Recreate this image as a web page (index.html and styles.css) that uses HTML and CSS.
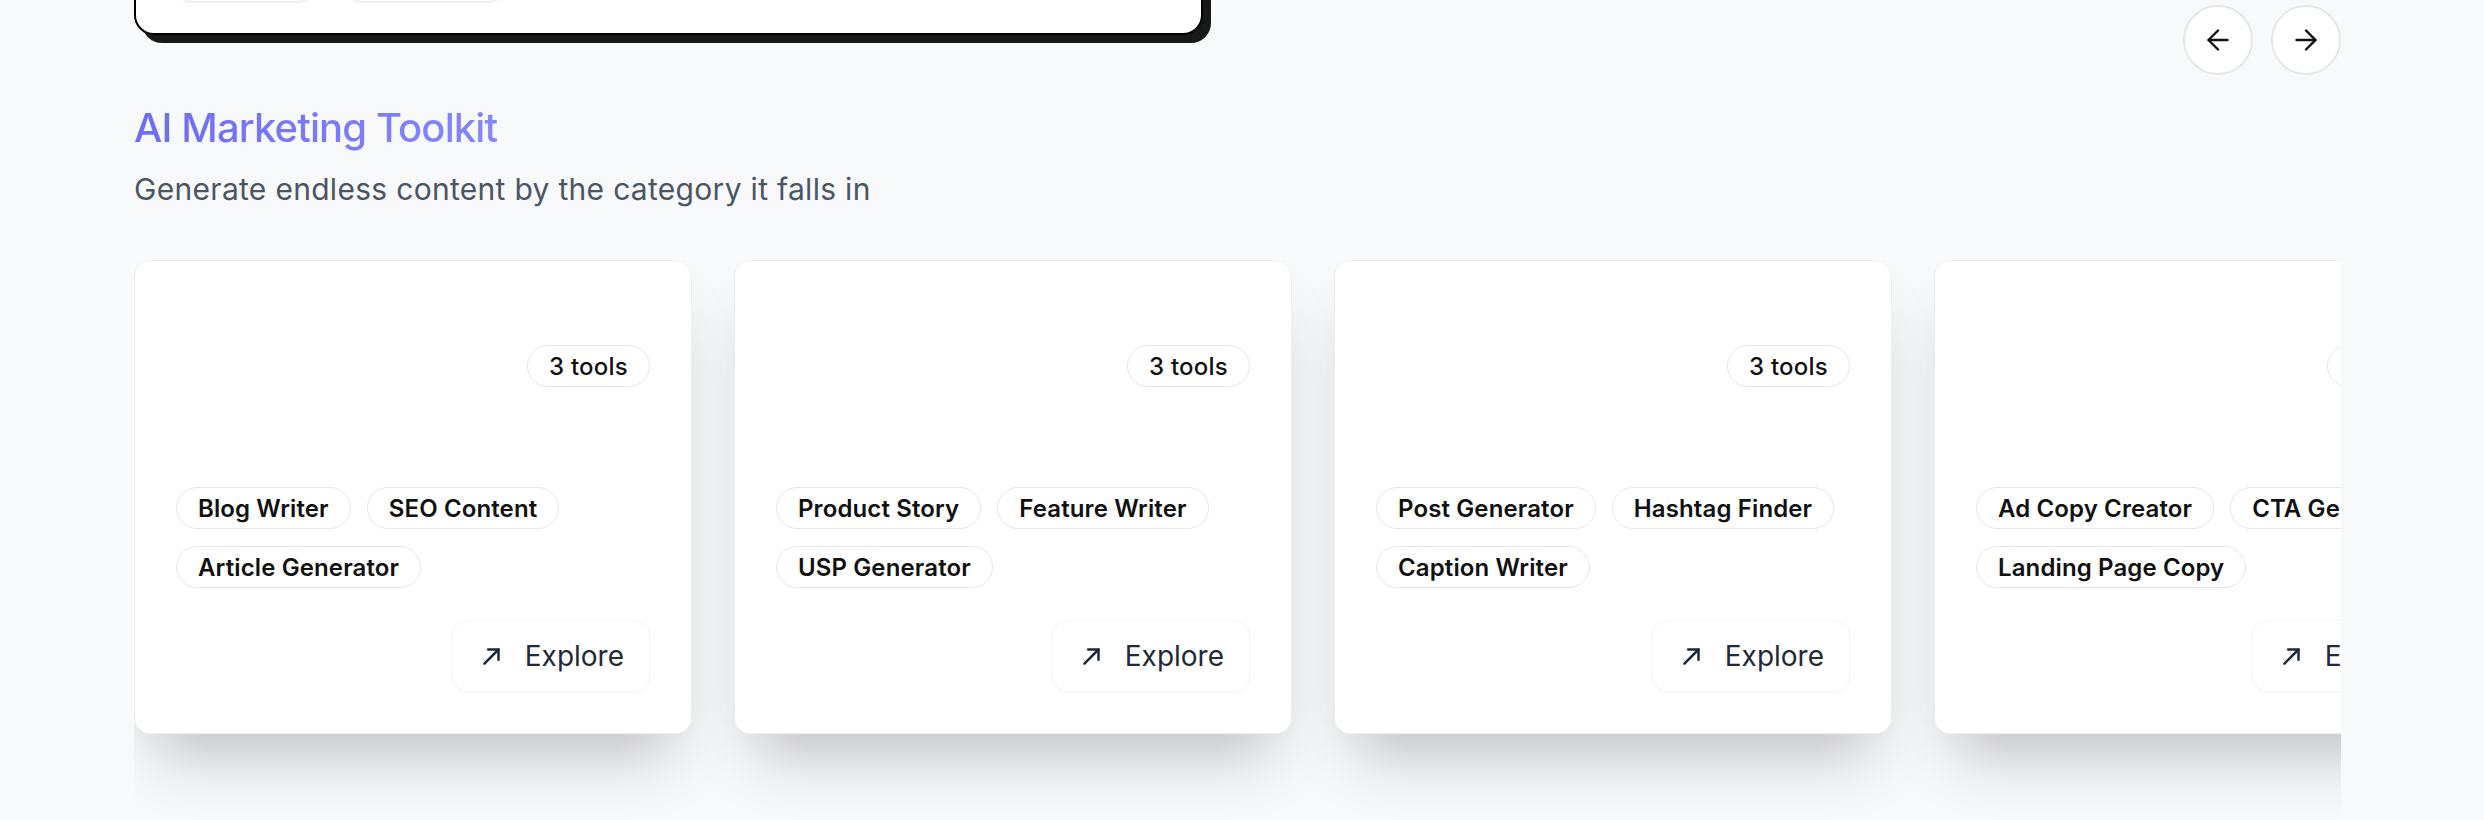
FILE: index.html
```html
<!DOCTYPE html>
<html lang="en">
<head>
<meta charset="utf-8">
<title>AI Marketing Toolkit</title>
<link rel="stylesheet" href="styles.css">
</head>
<body>
<div class="page">
  <div class="prev-row">
    <div class="prev-card">
      <div class="prev-pills">
        <span class="prev-pill prev-pill-a"></span>
        <span class="prev-pill prev-pill-b"></span>
      </div>
    </div>
    <div class="nav">
      <button class="nav-btn" aria-label="Previous">
        <svg width="22" height="22" viewBox="0 0 22 22" fill="none" stroke="#111" stroke-width="2.4" stroke-linecap="round" stroke-linejoin="round"><path d="M20.5 11H1.8"/><path d="M11 1.5 1.5 11 11 20.5"/></svg>
      </button>
      <button class="nav-btn" aria-label="Next">
        <svg width="22" height="22" viewBox="0 0 22 22" fill="none" stroke="#111" stroke-width="2.4" stroke-linecap="round" stroke-linejoin="round"><path d="M1.5 11h18.7"/><path d="M11 1.5 20.5 11 11 20.5"/></svg>
      </button>
    </div>
  </div>

  <h2 class="title">AI Marketing Toolkit</h2>
  <p class="subtitle">Generate endless content by the category it falls in</p>

  <div class="carousel">
    <div class="track">
      <div class="card">
        <div class="card-head"><span class="count">3 tools</span></div>
        <div class="tags">
          <span class="tag">Blog Writer</span>
          <span class="tag">SEO Content</span>
          <span class="tag">Article Generator</span>
        </div>
        <div class="card-foot">
          <a class="explore" href="#">
            <svg width="26" height="26" viewBox="0 0 24 24" fill="none" stroke="#1f2937" stroke-width="2.3" stroke-linecap="round" stroke-linejoin="round"><path d="M5 19 18 6"/><path d="M8.5 6H18v9.5"/></svg>
            <span>Explore</span>
          </a>
        </div>
      </div>
      <div class="card">
        <div class="card-head"><span class="count">3 tools</span></div>
        <div class="tags">
          <span class="tag">Product Story</span>
          <span class="tag">Feature Writer</span>
          <span class="tag">USP Generator</span>
        </div>
        <div class="card-foot">
          <a class="explore" href="#">
            <svg width="26" height="26" viewBox="0 0 24 24" fill="none" stroke="#1f2937" stroke-width="2.3" stroke-linecap="round" stroke-linejoin="round"><path d="M5 19 18 6"/><path d="M8.5 6H18v9.5"/></svg>
            <span>Explore</span>
          </a>
        </div>
      </div>
      <div class="card">
        <div class="card-head"><span class="count">3 tools</span></div>
        <div class="tags">
          <span class="tag">Post Generator</span>
          <span class="tag">Hashtag Finder</span>
          <span class="tag">Caption Writer</span>
        </div>
        <div class="card-foot">
          <a class="explore" href="#">
            <svg width="26" height="26" viewBox="0 0 24 24" fill="none" stroke="#1f2937" stroke-width="2.3" stroke-linecap="round" stroke-linejoin="round"><path d="M5 19 18 6"/><path d="M8.5 6H18v9.5"/></svg>
            <span>Explore</span>
          </a>
        </div>
      </div>
      <div class="card">
        <div class="card-head"><span class="count">3 tools</span></div>
        <div class="tags">
          <span class="tag">Ad Copy Creator</span>
          <span class="tag">CTA Generator</span>
          <span class="tag">Landing Page Copy</span>
        </div>
        <div class="card-foot">
          <a class="explore" href="#">
            <svg width="26" height="26" viewBox="0 0 24 24" fill="none" stroke="#1f2937" stroke-width="2.3" stroke-linecap="round" stroke-linejoin="round"><path d="M5 19 18 6"/><path d="M8.5 6H18v9.5"/></svg>
            <span>Explore</span>
          </a>
        </div>
      </div>
    </div>
  </div>
</div>
</body>
</html>
```
FILE: styles.css
```css
* { box-sizing: border-box; }

html, body {
  margin: 0;
  padding: 0;
  background: #f8f9fb;
  font-family: Inter, "Noto Sans", "Liberation Sans", sans-serif;
  overflow: hidden;
}

.page {
  width: 2207px;
  margin-left: 134px;
}

/* previous section (scrolled off) */
.prev-row {
  display: flex;
  justify-content: space-between;
  align-items: flex-start;
}

.prev-card {
  width: 1069px;
  margin-top: -62px;
  padding: 20px 36px 31px;
  background: #fff;
  border: 2px solid #000;
  border-radius: 20px;
  box-shadow: 8px 8px 0 #171918;
}

.prev-pills {
  display: flex;
  gap: 22px;
}

.prev-pill {
  display: block;
  height: 42px;
  border: 1.5px solid #ececef;
  border-radius: 999px;
  background: #fff;
  box-shadow: 0 1px 2px rgba(0, 0, 0, 0.05);
}

.prev-pill-a { width: 147px; }
.prev-pill-b { width: 168px; }

.nav {
  display: flex;
  gap: 18px;
  margin-top: 5px;
}

.nav-btn {
  width: 70px;
  height: 70px;
  border-radius: 50%;
  border: 2px solid #e6e7ea;
  background: #fff;
  display: flex;
  align-items: center;
  justify-content: center;
  padding: 0;
  cursor: pointer;
}

/* heading */
.title {
  margin: 29px 0 0;
  font-size: 40px;
  line-height: 48px;
  font-weight: 500;
  letter-spacing: -0.022em;
  background: linear-gradient(90deg, #6c6cf5 0%, #8787fa 100%);
  -webkit-background-clip: text;
  background-clip: text;
  color: transparent;
  display: inline-block;
}

.subtitle {
  margin: 19px 0 0;
  font-size: 30px;
  line-height: 36px;
  font-weight: 400;
  letter-spacing: 0.01em;
  color: #4b5563;
}

/* carousel */
.carousel {
  margin-top: 53px;
  overflow: hidden;
  padding-bottom: 100px;
}

.track {
  display: flex;
  gap: 42px;
}

.card {
  flex: 0 0 558px;
  height: 474px;
  display: flex;
  flex-direction: column;
  padding: 41px;
  background: #fff;
  border: 1px solid #efeff2;
  border-radius: 16px;
  box-shadow: 0 40px 60px -20px rgba(0, 0, 0, 0.23);
}

.card-head {
  height: 128px;
  display: flex;
  align-items: center;
  justify-content: flex-end;
}

.count {
  height: 42px;
  padding: 0 21px;
  display: inline-flex;
  align-items: center;
  border: 1.5px solid #e6e5e8;
  border-radius: 999px;
  font-size: 24px;
  font-weight: 500;
  color: #111;
  letter-spacing: 0.01em;
  white-space: nowrap;
}

.tags {
  margin-top: 57px;
  margin-right: -12px;
  display: flex;
  flex-wrap: wrap;
  gap: 17px 16px;
}

.tag {
  height: 42px;
  padding: 0 21px;
  display: inline-flex;
  align-items: center;
  border: 1.5px solid #e6e5e8;
  border-radius: 999px;
  font-size: 24px;
  font-weight: 600;
  color: #111;
  letter-spacing: 0.005em;
  white-space: nowrap;
}

.card-foot {
  margin-top: auto;
  display: flex;
  justify-content: flex-end;
}

.explore {
  height: 72px;
  padding: 0 25px 0 26px;
  display: inline-flex;
  align-items: center;
  gap: 20px;
  background: #fff;
  border: 1px solid #f6f6f8;
  border-radius: 16px;
  box-shadow: 0 1px 3px rgba(0, 0, 0, 0.03);
  font-size: 28px;
  font-weight: 400;
  color: #1f2937;
  text-decoration: none;
  white-space: nowrap;
}
```
